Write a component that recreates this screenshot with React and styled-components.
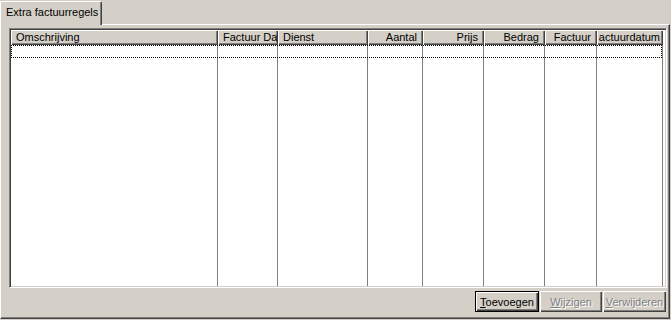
import React from "react";
import styled, { createGlobalStyle } from "styled-components";

const GlobalStyle = createGlobalStyle`
  html, body {
    margin: 0;
    padding: 0;
    background: #d4d0c8;
  }
  body {
    font-family: "Liberation Sans", Arial, sans-serif;
    font-size: 11px;
    color: #000;
  }
`;

const COLUMNS = [
  { title: "Omschrijving", width: 207, align: "flex-start" },
  { title: "Factuur Da", width: 60, align: "flex-start" },
  { title: "Dienst", width: 90, align: "flex-start" },
  { title: "Aantal", width: 55, align: "flex-end" },
  { title: "Prijs", width: 61, align: "flex-end" },
  { title: "Bedrag", width: 61, align: "flex-end" },
  { title: "Factuur", width: 52, align: "flex-end" },
  { title: "actuurdatum", width: 66, align: "flex-end", tight: true },
];

const Window = styled.div`
  width: 671px;
  height: 320px;
  background: #d4d0c8;
  display: flex;
  flex-direction: column;
  overflow: hidden;
`;

const TabStrip = styled.div`
  height: 24px;
  display: flex;
  align-items: flex-end;
`;

const Tab = styled.div`
  position: relative;
  z-index: 1;
  box-sizing: border-box;
  width: 102px;
  height: 24px;
  margin-bottom: -1px;
  background: #d4d0c8;
  border-left: 1px solid #fff;
  border-top: 1px solid #fff;
  border-right: 1px solid #404040;
  border-top-right-radius: 2px;
  box-shadow: inset -1px 0 #808080;
  padding: 3px 0 0 5px;
  white-space: nowrap;
  line-height: 14px;
`;

const Panel = styled.div`
  box-sizing: border-box;
  width: 670px;
  height: 295px;
  border-left: 1px solid #fff;
  border-top: 1px solid #fff;
  border-right: 1px solid #404040;
  border-bottom: 1px solid #404040;
  box-shadow: inset -1px -1px #808080;
  padding: 3px 2px 0 8px;
  display: flex;
  flex-direction: column;
  gap: 3px;
`;

const ListView = styled.div`
  box-sizing: border-box;
  height: 260px;
  background: #fff;
  border-top: 1px solid #808080;
  border-left: 1px solid #808080;
  border-right: 1px solid #fff;
  border-bottom: 1px solid #fff;
  box-shadow: inset 1px 1px #404040, inset -1px -1px #d4d0c8;
  padding: 1px;
  display: flex;
  flex-direction: column;
`;

const HeaderRow = styled.div`
  display: flex;
  height: 15px;
  flex-shrink: 0;
`;

const HeaderCell = styled.div`
  box-sizing: border-box;
  width: ${(p) => p.$width}px;
  flex-shrink: 0;
  display: flex;
  justify-content: ${(p) => p.$align};
  background: #d4d0c8;
  box-shadow: inset 1px 1px #fff, inset -1px -1px #404040, inset -2px -2px #808080;
  padding: 0 ${(p) => (p.$tight ? 3 : 6)}px 0 5px;
  line-height: 14px;
  white-space: nowrap;
  overflow: hidden;
`;

const HeaderText = styled.span`
  flex-shrink: 0;
`;

const Body = styled.div`
  position: relative;
  flex: 1;
  display: flex;
`;

const BodyColumn = styled.div`
  box-sizing: border-box;
  width: ${(p) => p.$width}px;
  flex-shrink: 0;
  border-right: 1px solid #808080;
`;

const FocusRow = styled.div`
  position: absolute;
  left: 0;
  top: 0;
  width: 651px;
  height: 13px;
  box-sizing: border-box;
  border: 1px dotted #000;
`;

const ButtonRow = styled.div`
  display: flex;
  justify-content: flex-end;
  gap: 1px;
  padding-right: 1px;
`;

const Button = styled.button`
  box-sizing: border-box;
  width: ${(p) => p.$width}px;
  height: 21px;
  padding: 0;
  margin: 0;
  font-family: "Liberation Sans", Arial, sans-serif;
  font-size: 11px;
  background: #d4d0c8;
  border: ${(p) => (p.$default ? "1px solid #000" : "none")};
  box-shadow: inset 1px 1px #fff, inset -1px -1px #404040, inset -2px -2px #808080;
  color: ${(p) => (p.disabled ? "#808080" : "#000")};
  text-shadow: ${(p) => (p.disabled ? "1px 1px 0 #fff" : "none")};
  cursor: default;

  u {
    text-decoration: underline;
  }
`;

export default function App() {
  return (
    <Window>
      <GlobalStyle />
      <TabStrip>
        <Tab>Extra factuurregels</Tab>
      </TabStrip>
      <Panel>
        <ListView>
          <HeaderRow>
            {COLUMNS.map((c) => (
              <HeaderCell key={c.title} $width={c.width} $align={c.align} $tight={c.tight}>
                <HeaderText>{c.title}</HeaderText>
              </HeaderCell>
            ))}
          </HeaderRow>
          <Body>
            {COLUMNS.map((c) => (
              <BodyColumn key={c.title} $width={c.width} />
            ))}
            <FocusRow />
          </Body>
        </ListView>
        <ButtonRow>
          <Button $width={64} $default>
            <u>T</u>oevoegen
          </Button>
          <Button $width={62} disabled>
            <u>W</u>ijzigen
          </Button>
          <Button $width={63} disabled>
            <u>V</u>erwijderen
          </Button>
        </ButtonRow>
      </Panel>
    </Window>
  );
}
